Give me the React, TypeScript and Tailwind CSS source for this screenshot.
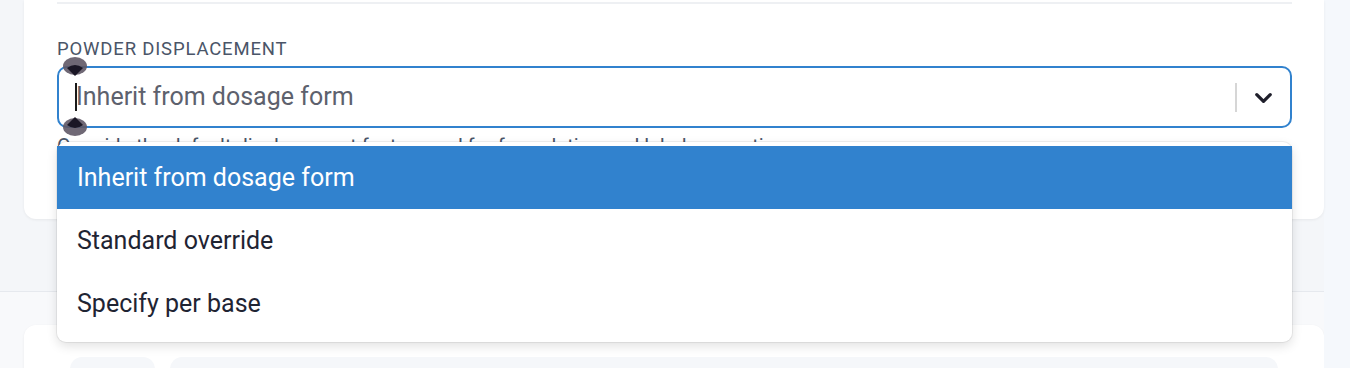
import React from 'react';

const options = ['Inherit from dosage form', 'Standard override', 'Specify per base'];

function SelectionHandle({ flip = false }: { flip?: boolean }) {
  return (
    <svg width="26" height="20" viewBox="0 0 26 20" className={flip ? 'rotate-180' : ''}>
      <ellipse cx="13" cy="9" rx="12" ry="9" fill="#5f5866" fillOpacity="0.9" />
      <path d="M5 11 Q13 5 21 11 L13 19 Z" fill="#1b1726" />
    </svg>
  );
}

export default function App() {
  return (
    <div
      className="w-[1350px] h-[368px] overflow-hidden flex bg-[#f5f8fc]"
      style={{ fontFamily: 'Roboto, "Liberation Sans", sans-serif' }}
    >
      <div className="w-[1324px] flex flex-col bg-[#f4f6f9]">
        {/* card */}
        <div className="shrink-0 ml-[24px] w-[1300px] h-[219px] bg-white rounded-b-[12px] shadow-[0_1px_3px_rgba(0,0,0,0.06)] px-[33px] pr-[32px] relative z-10">
          <div className="h-[2px] mt-[2px] bg-[#eef0f3]" />
          <div className="mt-[35px] text-[18.5px] leading-[20px] tracking-[0.045em] text-[#4a5568] uppercase">
            Powder displacement
          </div>
          <div className="relative mt-[7px]">
            <div className="h-[62px] border-[2.5px] border-[#3182ce] rounded-[10px] flex items-center">
              <div className="flex-1 flex items-center pl-[16px] relative">
                <span className="w-[2px] h-[28px] bg-[#1a1a1a] mr-[-1px]" />
                <span className="text-[25px] text-[#5d616d]">Inherit from dosage form</span>
              </div>
              <span className="w-[2px] h-[29px] bg-[#d6d6d6]" />
              <div className="w-[53px] flex items-center justify-center">
                <svg width="23" height="23" viewBox="0 0 24 24" fill="none" stroke="#1f1f2b" strokeWidth="3.4" strokeLinecap="round" strokeLinejoin="round">
                  <path d="M5 9l7 7 7-7" />
                </svg>
              </div>
            </div>
            <div className="absolute left-[5px] top-[-9px]">
              <SelectionHandle />
            </div>
            <div className="absolute left-[5px] top-[50px]">
              <SelectionHandle flip />
            </div>
            <div className="mt-[6px] text-[20px] leading-[24px] text-[#4a5568] whitespace-nowrap">
              Override the default displacement factor used for formulation and label generation.
            </div>
            {/* dropdown menu */}
            <div className="absolute left-0 right-0 top-[76px] bg-white rounded-[9px] shadow-[0_0_0_1px_rgba(0,0,0,0.06),0_4px_11px_rgba(0,0,0,0.12)] pt-[4px] pb-[7px] z-20">
              {options.map((opt, i) => (
                <div
                  key={opt}
                  className={`h-[63px] flex items-center px-[20px] text-[25px] ${
                    i === 0 ? 'bg-[#3182ce] text-white' : 'text-[#1f2433]'
                  }`}
                >
                  {opt}
                </div>
              ))}
            </div>
          </div>
        </div>
        {/* divider */}
        <div className="shrink-0 mt-[72px] h-px bg-[#e6e9ee]" />
        <div className="flex-1 bg-[#f8f9fb] pt-[33px]">
          <div className="ml-[24px] w-[1300px] h-[60px] bg-white rounded-t-[12px] shadow-[0_1px_3px_rgba(0,0,0,0.06)] flex gap-[15px] px-[46px] pt-[32px]">
            <div className="w-[85px] h-[30px] rounded-[12px] bg-[#f5f7fa]" />
            <div className="w-[1110px] h-[30px] rounded-[12px] bg-[#f5f7fa]" />
          </div>
        </div>
      </div>
      <div className="flex-1 bg-[#f5f8fc]" />
    </div>
  );
}
